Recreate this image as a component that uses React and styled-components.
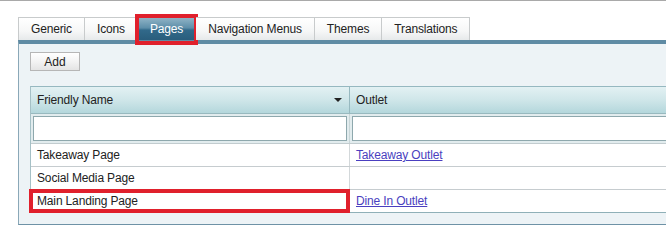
import React from 'react'
import styled, { createGlobalStyle, css } from 'styled-components'

const GlobalStyle = createGlobalStyle`
  html, body {
    margin: 0;
    padding: 0;
    background: #fff;
    overflow: hidden;
  }
  body {
    font-family: "Liberation Sans", Arial, sans-serif;
    font-size: 12px;
    letter-spacing: -0.15px;
    color: #222;
  }
`

const tabs = ['Generic', 'Icons', 'Pages', 'Navigation Menus', 'Themes', 'Translations']

const rows = [
  { name: 'Takeaway Page', outlet: 'Takeaway Outlet' },
  { name: 'Social Media Page', outlet: '' },
  { name: 'Main Landing Page', outlet: 'Dine In Outlet', marked: true },
]

function App() {
  return (
    <Page>
      <GlobalStyle />
      <TopRule />
      <Body>
        <TabBar>
          {tabs.map((t) => (
            <Tab key={t} active={t === 'Pages'}>
              {t}
            </Tab>
          ))}
        </TabBar>
        <Panel>
          <AddButton type="button">Add</AddButton>
          <Grid>
            <HeaderRow>
              <HeaderCell>
                Friendly Name
                <SortArrow />
              </HeaderCell>
              <HeaderCell>Outlet</HeaderCell>
            </HeaderRow>
            <FilterRow>
              <FilterCell>
                <FilterInput />
              </FilterCell>
              <FilterCell>
                <FilterInput />
              </FilterCell>
            </FilterRow>
            {rows.map((r) => (
              <Row key={r.name}>
                <Cell marked={r.marked}>{r.name}</Cell>
                <Cell>{r.outlet && <OutletLink href="#">{r.outlet}</OutletLink>}</Cell>
              </Row>
            ))}
          </Grid>
        </Panel>
      </Body>
    </Page>
  )
}

export default App

const Page = styled.div`
  width: 666px;
  height: 249px;
  overflow: hidden;
  background: #fff;
`
const TopRule = styled.div`
  height: 1px;
  background: #a9a9a9;
`
const Body = styled.div`
  padding: 16px 0 0 18px;
`
const TabBar = styled.div`
  display: flex;
  align-items: flex-end;
  height: 23px;
`
const Tab = styled.div`
  position: relative;
  height: 23px;
  box-sizing: border-box;
  padding: 0 12px;
  display: flex;
  align-items: center;
  white-space: nowrap;
  border: 1px solid #c8cbcc;
  border-bottom: none;
  border-left-width: 0;
  background: linear-gradient(#ffffff, #f6f7f7 60%, #e6e9ea);
  color: #222;
  &:first-child {
    border-left-width: 1px;
  }
  ${(p) =>
    p.active &&
    css`
      color: #fff;
      border-color: #2f6582;
      background: linear-gradient(#8fb3c6, #5d8ea9 45%, #31698a 55%, #295d7c);
      &::after {
        content: '';
        position: absolute;
        left: -3px;
        right: -3px;
        top: -4px;
        bottom: -5px;
        border: 4px solid #e0202c;
        pointer-events: none;
      }
    `}
`
const Panel = styled.div`
  border-top: 4px solid #5f8ba4;
  border-left: 1px solid #8aa8b8;
  border-bottom: 1px solid #6e92a6;
  background: #edf3f6;
  padding: 8px 0 11px 11px;
  width: 700px;
`
const AddButton = styled.button`
  display: block;
  width: 50px;
  height: 19px;
  padding: 0;
  font: inherit;
  color: #222;
  border: 1px solid #b6b6b6;
  background: linear-gradient(#ffffff, #f3f3f3 50%, #e4e4e4);
  border-radius: 0;
  margin-bottom: 15px;
`
const Grid = styled.div`
  border-left: 1px solid #a5c0c6;
  border-top: 1px solid #96b8c0;
  border-bottom: 1px solid #8fb0b8;
  background: #fff;
`
const HeaderRow = styled.div`
  display: grid;
  grid-template-columns: 319px 1fr;
  height: 26px;
  background: linear-gradient(#e3f1f3, #cfe6e9 50%, #b4d7dc);
  border-bottom: 1px solid #98b9bf;
`
const HeaderCell = styled.div`
  display: flex;
  align-items: center;
  justify-content: space-between;
  padding: 0 6px;
  border-right: 1px solid #97b9c0;
`
const SortArrow = styled.span`
  width: 0;
  height: 0;
  border-left: 4px solid transparent;
  border-right: 4px solid transparent;
  border-top: 4px solid #222;
  margin-right: 1px;
`
const FilterRow = styled.div`
  display: grid;
  grid-template-columns: 319px 1fr;
  height: 29px;
  background: #e2ecee;
  border-bottom: 1px solid #c2cccf;
`
const FilterCell = styled.div`
  padding: 2px;
  border-right: 1px solid #c9d6d8;
  &:last-child {
    padding-right: 38px;
  }
`
const FilterInput = styled.div`
  height: 25px;
  box-sizing: border-box;
  border: 1px solid #8ea8ad;
  background: #fff;
`
const Row = styled.div`
  display: grid;
  grid-template-columns: 319px 1fr;
  height: 22px;
  border-bottom: 1px solid #c6cccf;
  &:last-child {
    border-bottom: none;
  }
`
const Cell = styled.div`
  position: relative;
  display: flex;
  align-items: center;
  padding: 0 6px;
  border-right: 1px solid #d3d8da;
  ${(p) =>
    p.marked &&
    css`
      &::after {
        content: '';
        position: absolute;
        left: -2px;
        right: -1px;
        top: -1px;
        bottom: -1px;
        border: 4px solid #e0202c;
        pointer-events: none;
      }
    `}
`
const OutletLink = styled.a`
  color: #4a3fc0;
  text-decoration: underline;
`
